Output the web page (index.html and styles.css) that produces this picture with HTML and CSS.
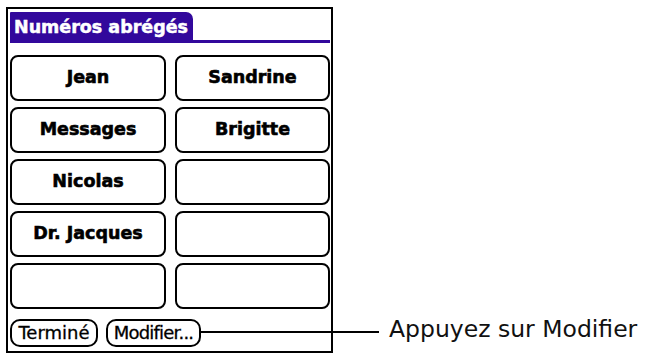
FILE: index.html
```html
<!DOCTYPE html>
<html lang="fr">
<head>
<meta charset="utf-8">
<title>Numéros abrégés</title>
<link rel="stylesheet" href="styles.css">
</head>
<body>
<div class="page">
  <div class="screen">
    <div class="titlebar">
      <div class="tab">Numéros abrégés</div>
    </div>
    <div class="grid">
      <div class="btn">Jean</div>
      <div class="btn">Sandrine</div>
      <div class="btn">Messages</div>
      <div class="btn">Brigitte</div>
      <div class="btn">Nicolas</div>
      <div class="btn"></div>
      <div class="btn">Dr. Jacques</div>
      <div class="btn"></div>
      <div class="btn"></div>
      <div class="btn"></div>
    </div>
    <div class="actions">
      <div class="pill pill-done">Terminé</div>
      <div class="pill pill-edit">Modifier...</div>
    </div>
  </div>
  <div class="callout-line"></div>
  <div class="callout-text">Appuyez sur Modifier</div>
</div>
</body>
</html>
```

FILE: styles.css
```css
* { box-sizing: border-box; }
html, body {
  margin: 0;
  padding: 0;
  background: #fff;
}
.page {
  position: relative;
  width: 648px;
  height: 354px;
  overflow: hidden;
}
.screen {
  margin: 7px 0 0 6px;
  width: 327px;
  height: 346px;
  border: 2px solid #000;
  padding: 3px 1px 0 2px;
  display: flex;
  flex-direction: column;
  font-family: "DejaVu Sans", sans-serif;
  color: #000;
}
.titlebar {
  border-bottom: 3px solid #32089c;
  display: flex;
}
.tab {
  width: 183px;
  height: 28px;
  background: #32089c;
  color: #fff;
  border-top-right-radius: 7px;
  border-top-left-radius: 1px;
  font-weight: bold;
  font-size: 17.5px;
  line-height: 25px;
  padding: 3px 0 0 4px;
  white-space: nowrap;
  -webkit-text-stroke: 0.5px #fff;
}
.grid {
  margin-top: 12px;
  display: grid;
  grid-template-columns: 156px 155px;
  grid-auto-rows: 46px;
  column-gap: 9px;
  row-gap: 6px;
}
.btn {
  border: 2px solid #000;
  border-radius: 8px;
  display: flex;
  align-items: center;
  justify-content: center;
  font-weight: bold;
  font-size: 17.5px;
  padding-bottom: 3px;
  -webkit-text-stroke: 0.6px #000;
}
.actions {
  margin-top: 10px;
  display: flex;
  gap: 8px;
}
.pill {
  height: 28px;
  border: 2px solid #000;
  border-radius: 10px;
  display: flex;
  align-items: center;
  justify-content: center;
  font-size: 18px;
  padding-bottom: 1px;
  white-space: nowrap;
  -webkit-text-stroke: 0.3px #000;
}
.pill-done { width: 88px; }
.pill-edit { width: 95px; letter-spacing: -0.8px; }
.callout-line {
  position: absolute;
  left: 200px;
  top: 331px;
  width: 179px;
  height: 2px;
  background: #000;
}
.callout-text {
  position: absolute;
  left: 389px;
  top: 315px;
  font-family: "DejaVu Sans", sans-serif;
  font-size: 23.5px;
  color: #111;
  white-space: nowrap;
}
```
